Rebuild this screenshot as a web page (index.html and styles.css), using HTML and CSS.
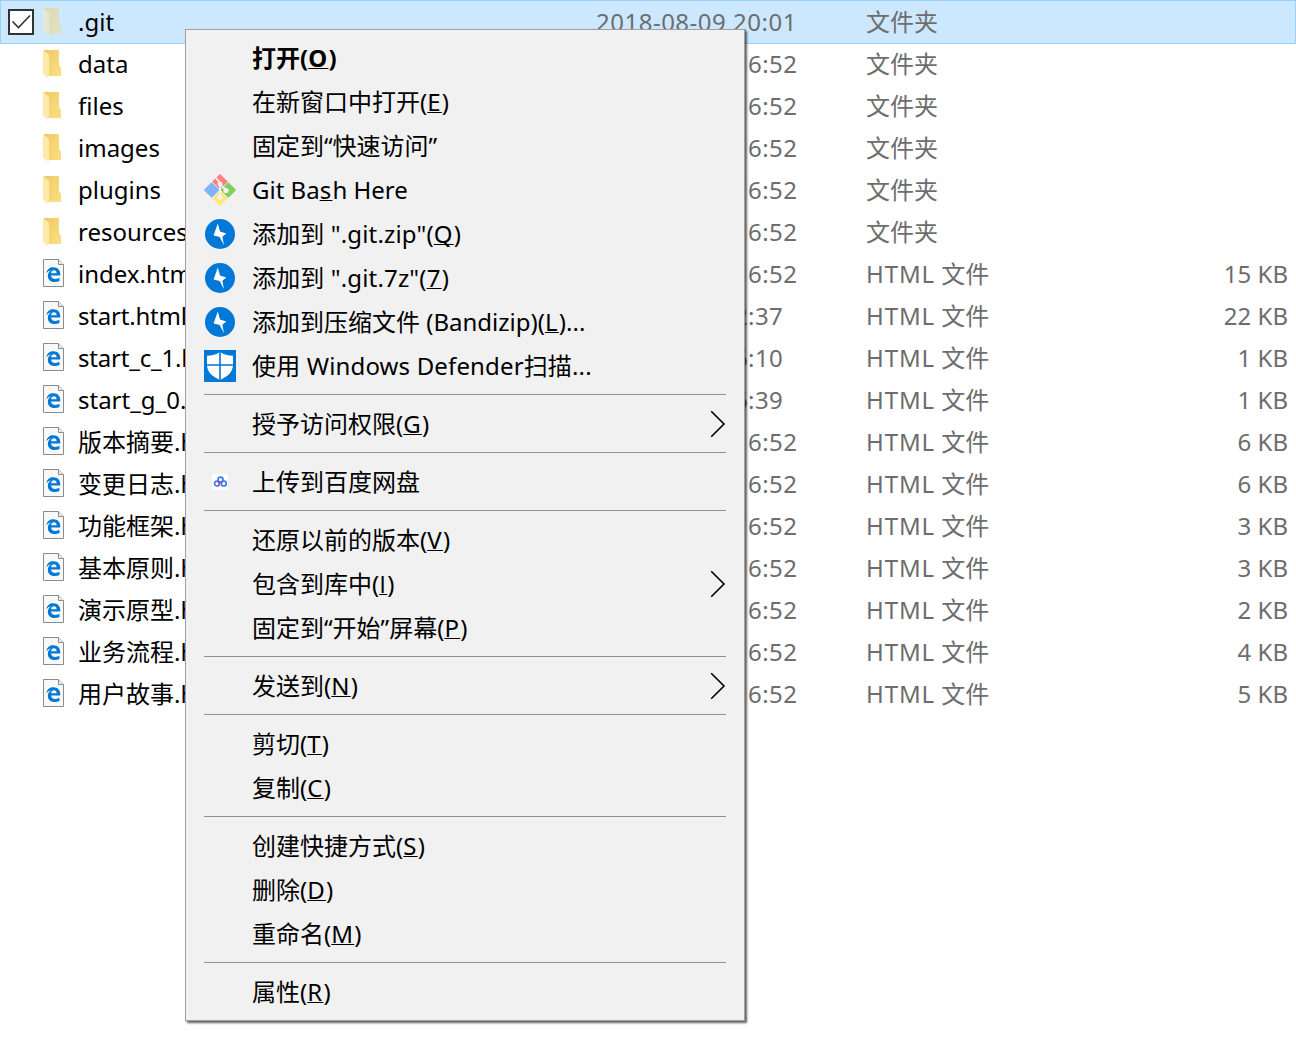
FILE: index.html
```
<!DOCTYPE html>
<html lang="zh-CN">
<head>
<meta charset="utf-8">
<title>文件资源管理器</title>
<link rel="stylesheet" href="styles.css">
</head>
<body>
<svg class="sprite" aria-hidden="true">
  <defs>
    <linearGradient id="fold-a" x1="0" y1="0" x2="0" y2="1"><stop offset="0" stop-color="#ffe9a6"/><stop offset="1" stop-color="#ffe9ad"/></linearGradient>
    <linearGradient id="fold-b" x1="0" y1="0" x2="1" y2="1"><stop offset="0" stop-color="#efca66"/><stop offset="1" stop-color="#fbdf82"/></linearGradient>
  </defs>
  <symbol id="folder" viewBox="0 0 20 28">
    <path d="M1 0h15v15.500l2 2V26H5z" fill="url(#fold-b)"/>
    <path d="M0 0l6 5v21.500L0 24z" fill="url(#fold-a)"/>
    <path d="M0 24l6 2.500-1 .5z" fill="#f3d98c"/>
  </symbol>
  <symbol id="html" viewBox="0 0 21 28">
    <path d="M.5.500h15l5 5v22H.5z" fill="#f8f8f8" stroke="#8b8b8b"/>
    <path d="M15.500.500v5h5" fill="#eee" stroke="#8b8b8b"/>
    <path transform="translate(-.8 -1.300) scale(1.060)" d="M4 14.600C4.600 10.700 7.200 9 10.500 9c4.200 0 6.500 2.700 6.500 6.300v1.500H8.300c.2 2.300 2 3.300 4.100 3.300 1.500 0 2.700-.4 3.900-1.100v3c-1.400.7-3 1-4.600 1-4.200 0-6.400-2.600-6.400-5.900 0-2.400 1.300-4.300 3.400-5.300-2.200.4-3.700 1.400-4.700 2.800zM8.400 14.600h5.200c0-1.800-.9-2.800-2.500-2.800-1.500 0-2.500 1.200-2.700 2.800z" fill="#0078d7" fill-rule="evenodd"/>
  </symbol>
  <symbol id="bandizip" viewBox="0 0 32 32">
    <circle cx="16" cy="16" r="15" fill="#0078d7"/>
    <path d="M13.800 5.500L9.600 17.600l6 1.400 4.300 8-1.500-8.300 3.900-3.300-6.300-1.800z" fill="#fff"/>
  </symbol>
  <symbol id="gitbash" viewBox="0 0 32 32">
    <path d="M16 1.200l6.900 6.900L16 15 9.100 8.100z" fill="#ff8080" stroke="#ff8080" stroke-width="1.800" stroke-linejoin="round"/>
    <path d="M24 9.100l6.900 6.900-6.900 6.900-6.900-6.900z" fill="#80d060" stroke="#80d060" stroke-width="1.800" stroke-linejoin="round"/>
    <path d="M8 9.100l6.900 6.900L8 22.900 1.100 16z" fill="#80b3ff" stroke="#80b3ff" stroke-width="1.800" stroke-linejoin="round"/>
    <path d="M16 17l6.900 6.900-6.900 6.900-6.900-6.900z" fill="#ffe680" stroke="#ffe680" stroke-width="1.800" stroke-linejoin="round"/>
    <path d="M8 8l8 8 8-8M8 24l8-8 8 8" fill="none" stroke="#f1f1f1" stroke-width=".8"/>
    <path d="M12 4l4 5v15M16 10l6 6" fill="none" stroke="#f1f1f1" stroke-width="1.800"/>
    <circle cx="16" cy="10" r="2.400" fill="#f1f1f1"/><circle cx="22" cy="16.500" r="2.600" fill="#f1f1f1"/><circle cx="16" cy="23.500" r="2.600" fill="#f1f1f1"/>
  </symbol>
  <symbol id="defender" viewBox="0 0 32 32">
    <path d="M0 0h32v32H0z" fill="#0078d7"/>
    <path d="M16 2c4 2.600 8 3.700 13 3.700V15c0 6.500-5 11.500-13 15C8 26.500 3 21.500 3 15V5.700C8 5.700 12 4.600 16 2z" fill="#fff"/>
    <path d="M16 1v30M2 15h28" stroke="#0078d7" stroke-width="1.600"/>
  </symbol>
  <symbol id="baidu" viewBox="0 0 16 16">
    <rect width="16" height="16" rx="3" fill="#fff"/>
    <g fill="none" stroke="#3878f5" stroke-width="1.700"><circle cx="8.500" cy="5.600" r="2.500"/><circle cx="5" cy="9.500" r="2.500"/><circle cx="11.800" cy="9.500" r="2.500"/></g>
    <path d="M5.600 7.500l2.600 2" stroke="#ef3b42" stroke-width="1.700"/>
  </symbol>
  <symbol id="chevron" viewBox="0 0 16 28"><path d="M1.200 1.200L14 14 1.200 26.800" fill="none" stroke="#000" stroke-width="1.600"/></symbol>
</svg>

<main class="files">
  <div class="row selected"><span class="check"><svg viewBox="0 0 22 22"><path d="M2.500 10.500l6 6L20 4.500" fill="none" stroke="#333" stroke-width="1.600"/></svg></span><svg class="icon folder"><use href="#folder"/></svg><span class="name">.git</span><span class="date">2018-08-09 20:01</span><span class="type">文件夹</span><span class="size"></span></div>
  <div class="row"><span class="check"></span><svg class="icon folder"><use href="#folder"/></svg><span class="name">data</span><span class="date">2018-08-09 16:52</span><span class="type">文件夹</span><span class="size"></span></div>
  <div class="row"><span class="check"></span><svg class="icon folder"><use href="#folder"/></svg><span class="name">files</span><span class="date">2018-08-09 16:52</span><span class="type">文件夹</span><span class="size"></span></div>
  <div class="row"><span class="check"></span><svg class="icon folder"><use href="#folder"/></svg><span class="name">images</span><span class="date">2018-08-09 16:52</span><span class="type">文件夹</span><span class="size"></span></div>
  <div class="row"><span class="check"></span><svg class="icon folder"><use href="#folder"/></svg><span class="name">plugins</span><span class="date">2018-08-09 16:52</span><span class="type">文件夹</span><span class="size"></span></div>
  <div class="row"><span class="check"></span><svg class="icon folder"><use href="#folder"/></svg><span class="name">resources</span><span class="date">2018-08-09 16:52</span><span class="type">文件夹</span><span class="size"></span></div>
  <div class="row"><span class="check"></span><svg class="icon"><use href="#html"/></svg><span class="name">index.html</span><span class="date">2018-08-09 16:52</span><span class="type"><span class="ext">HTML</span> 文件</span><span class="size">15 KB</span></div>
  <div class="row"><span class="check"></span><svg class="icon"><use href="#html"/></svg><span class="name tight">start.html</span><span class="date">2018-08-09 2:37</span><span class="type"><span class="ext">HTML</span> 文件</span><span class="size">22 KB</span></div>
  <div class="row"><span class="check"></span><svg class="icon"><use href="#html"/></svg><span class="name tight">start_c_1.html</span><span class="date">2018-08-09 6:10</span><span class="type"><span class="ext">HTML</span> 文件</span><span class="size">1 KB</span></div>
  <div class="row"><span class="check"></span><svg class="icon"><use href="#html"/></svg><span class="name">start_g_0.html</span><span class="date">2018-08-09 6:39</span><span class="type"><span class="ext">HTML</span> 文件</span><span class="size">1 KB</span></div>
  <div class="row"><span class="check"></span><svg class="icon"><use href="#html"/></svg><span class="name">版本摘要.html</span><span class="date">2018-08-09 16:52</span><span class="type"><span class="ext">HTML</span> 文件</span><span class="size">6 KB</span></div>
  <div class="row"><span class="check"></span><svg class="icon"><use href="#html"/></svg><span class="name">变更日志.html</span><span class="date">2018-08-09 16:52</span><span class="type"><span class="ext">HTML</span> 文件</span><span class="size">6 KB</span></div>
  <div class="row"><span class="check"></span><svg class="icon"><use href="#html"/></svg><span class="name">功能框架.html</span><span class="date">2018-08-09 16:52</span><span class="type"><span class="ext">HTML</span> 文件</span><span class="size">3 KB</span></div>
  <div class="row"><span class="check"></span><svg class="icon"><use href="#html"/></svg><span class="name">基本原则.html</span><span class="date">2018-08-09 16:52</span><span class="type"><span class="ext">HTML</span> 文件</span><span class="size">3 KB</span></div>
  <div class="row"><span class="check"></span><svg class="icon"><use href="#html"/></svg><span class="name">演示原型.html</span><span class="date">2018-08-09 16:52</span><span class="type"><span class="ext">HTML</span> 文件</span><span class="size">2 KB</span></div>
  <div class="row"><span class="check"></span><svg class="icon"><use href="#html"/></svg><span class="name">业务流程.html</span><span class="date">2018-08-09 16:52</span><span class="type"><span class="ext">HTML</span> 文件</span><span class="size">4 KB</span></div>
  <div class="row"><span class="check"></span><svg class="icon"><use href="#html"/></svg><span class="name">用户故事.html</span><span class="date">2018-08-09 16:52</span><span class="type"><span class="ext">HTML</span> 文件</span><span class="size">5 KB</span></div>
</main>

<nav class="menu">
  <div class="item default"><span class="glyph"></span><span class="label">打开(<u>O</u>)</span></div>
  <div class="item"><span class="glyph"></span><span class="label">在新窗口中打开(<u>E</u>)</span></div>
  <div class="item"><span class="glyph"></span><span class="label">固定到“快速访问”</span></div>
  <div class="item"><span class="glyph"><svg><use href="#gitbash"/></svg></span><span class="label">Git Ba<u>s</u>h Here</span></div>
  <div class="item"><span class="glyph"><svg><use href="#bandizip"/></svg></span><span class="label loose">添加到 ".git.zip"(<u>Q</u>)</span></div>
  <div class="item"><span class="glyph"><svg><use href="#bandizip"/></svg></span><span class="label loose">添加到 ".git.7z"(<u>7</u>)</span></div>
  <div class="item"><span class="glyph"><svg><use href="#bandizip"/></svg></span><span class="label">添加到压缩文件 (Bandizip)(<u>L</u>)...</span></div>
  <div class="item"><span class="glyph"><svg><use href="#defender"/></svg></span><span class="label loose">使用 Windows Defender扫描...</span></div>
  <hr>
  <div class="item"><span class="glyph"></span><span class="label">授予访问权限(<u>G</u>)</span><svg class="chevron"><use href="#chevron"/></svg></div>
  <hr>
  <div class="item"><span class="glyph"><svg class="small"><use href="#baidu"/></svg></span><span class="label">上传到百度网盘</span></div>
  <hr>
  <div class="item"><span class="glyph"></span><span class="label">还原以前的版本(<u>V</u>)</span></div>
  <div class="item"><span class="glyph"></span><span class="label">包含到库中(<u class="plain">I</u>)</span><svg class="chevron"><use href="#chevron"/></svg></div>
  <div class="item"><span class="glyph"></span><span class="label">固定到“开始”屏幕(<u>P</u>)</span></div>
  <hr>
  <div class="item"><span class="glyph"></span><span class="label">发送到(<u>N</u>)</span><svg class="chevron"><use href="#chevron"/></svg></div>
  <hr>
  <div class="item"><span class="glyph"></span><span class="label">剪切(<u>T</u>)</span></div>
  <div class="item"><span class="glyph"></span><span class="label">复制(<u>C</u>)</span></div>
  <hr>
  <div class="item"><span class="glyph"></span><span class="label">创建快捷方式(<u>S</u>)</span></div>
  <div class="item"><span class="glyph"></span><span class="label">删除(<u>D</u>)</span></div>
  <div class="item"><span class="glyph"></span><span class="label">重命名(<u>M</u>)</span></div>
  <hr>
  <div class="item"><span class="glyph"></span><span class="label">属性(<u>R</u>)</span></div>
</nav>
</body>
</html>
```
FILE: styles.css
```
* { box-sizing: border-box; }
body {
  margin: 0;
  height: 1048px;
  overflow: hidden;
  position: relative;
  background: #fff;
  color: #000;
  font: 24px/40px "Noto Sans", "Noto Sans CJK SC", sans-serif;
}
.sprite { position: absolute; width: 0; height: 0; }
.files { display: flex; flex-direction: column; }
.row {
  display: grid;
  grid-template-columns: 26px 44px 518px 270px 200px 1fr;
  align-items: center;
  height: 42px;
  padding: 0 8px;
  white-space: nowrap;
}
.row.selected {
  height: 44px;
  margin-bottom: -1px;
  padding: 0 7px;
  border: 1px solid #99d1ff;
  background: #cce8ff;
}
.check { width: 26px; height: 26px; }
.selected .check { border: 2px solid #333; background: #fff; }
.check svg { display: block; width: 22px; height: 22px; }
.icon { width: 21px; height: 28px; justify-self: start; margin-left: 9px; margin-top: -2px; }
.folder { width: 20px; margin-top: 0; }
.selected .folder { opacity: .5; }
.name.tight { letter-spacing: -.2px; }
.date, .type, .size { color: #6d6d6d; }
.date { padding-left: 2px; letter-spacing: .4px; }
.selected .date { padding-left: 0; letter-spacing: .5px; }
.ext { letter-spacing: .9px; }
.size { text-align: right; }

.menu {
  position: absolute;
  left: 185px;
  top: 29px;
  width: 560px;
  height: 992px;
  padding: 6px 18px;
  border: 1px solid #a0a0a0;
  background: #f1f1f1;
  box-shadow: 2px 2px 2px rgba(0, 0, 0, .62);
}
.item { display: flex; align-items: center; height: 44px; white-space: pre; }
.glyph { display: flex; justify-content: center; width: 32px; margin-right: 16px; }
.glyph svg { display: block; width: 32px; height: 32px; }
.glyph svg.small { width: 16px; height: 16px; }
.label { flex: 1; }
.loose { letter-spacing: .15px; }
.default { font-weight: 700; }
.menu u { letter-spacing: 1.3px; text-decoration-thickness: 1px; text-underline-offset: 1px; text-decoration-skip-ink: none; }
.menu u.plain { font-family: "Open Sans", sans-serif; }
.chevron { width: 16px; height: 28px; }
.menu hr { height: 1px; width: 100%; margin: 6px 0 7px; border: 0; background: #919191; }
```
